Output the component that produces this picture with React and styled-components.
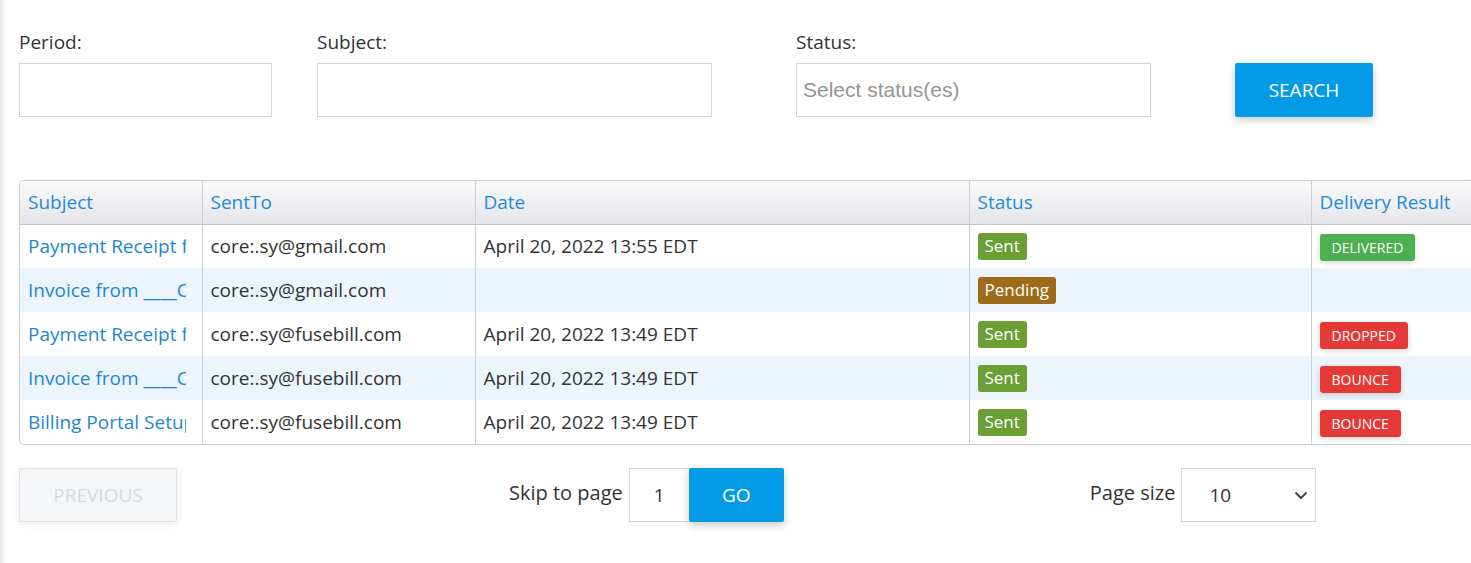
import React from 'react';
import styled, { createGlobalStyle } from 'styled-components';

const GlobalStyle = createGlobalStyle`
  html, body {
    margin: 0;
    padding: 0;
    overflow: hidden;
  }
  body {
    background: linear-gradient(to right, #e6e6e6 0, #f3f3f3 3px, #fff 7px);
    font-family: 'Open Sans', 'Noto Sans', sans-serif;
    color: #333;
  }
`;

const Page = styled.div`
  width: 1471px;
  height: 563px;
  padding: 30px 0 0 19px;
  box-sizing: border-box;
`;

const FilterRow = styled.div`
  display: flex;
  align-items: flex-end;
`;

const Field = styled.div`
  display: flex;
  flex-direction: column;
  width: ${({ w }) => w}px;
  margin-right: ${({ gap }) => gap || 0}px;
`;

const Label = styled.label`
  font-size: 19px;
  line-height: 24px;
  color: #333;
  margin-bottom: 9px;
`;

const TextInput = styled.div`
  height: 54px;
  box-sizing: border-box;
  border: 1px solid #ccd6dd;
  background: #fff;
  display: flex;
  align-items: center;
  padding-left: 6px;
`;

const Placeholder = styled.span`
  font-family: 'Liberation Sans', Arial, sans-serif;
  font-size: 21px;
  color: #959595;
`;

const PrimaryButton = styled.button`
  height: 54px;
  width: ${({ w }) => w}px;
  border: none;
  border-radius: 2px;
  background: #039be5;
  color: #fff;
  font-family: 'Open Sans', sans-serif;
  font-size: 19px;
  text-transform: uppercase;
  box-shadow: 0 3px 8px rgba(0, 0, 0, 0.22);
  cursor: pointer;
  padding: 0;
`;

const TableWrap = styled.div`
  margin-top: 63px;
  width: 1520px;
  border: 1px solid #cccccf;
  border-right: none;
  border-radius: 5px 0 0 5px;
  overflow: hidden;
`;

const Table = styled.table`
  border-collapse: collapse;
  table-layout: fixed;
  width: 100%;
  font-size: 19px;
`;

const HeadCell = styled.th`
  height: 43px;
  box-sizing: border-box;
  text-align: left;
  font-weight: 400;
  color: #1f8bd5;
  padding: 0 8px;
  background: linear-gradient(to bottom, #fafafb 0%, #e5e5ea 100%);
  border-left: 1px solid #cfcfd4;
  border-bottom: 1px solid #c6c6cd;
  white-space: nowrap;
  &:first-child { border-left: none; }
`;

const Row = styled.tr`
  height: 44px;
  background: ${({ alt }) => (alt ? '#ecf4fd' : '#fff')};
  & + & td { border-top: 1px solid #d2d8e2; }
`;

const Cell = styled.td`
  padding: 0 8px;
  border-left: 1px solid #cfcfd4;
  white-space: nowrap;
  overflow: hidden;
  color: ${({ link }) => (link ? '#1f86d0' : '#333')};
  &:first-child { border-left: none; }
`;

const Clip = styled.div`
  overflow: hidden;
  margin-right: 8px;
`;

const StatusBadge = styled.span`
  display: inline-block;
  padding: 1px 7px 2px;
  border-radius: 3px;
  color: #fff;
  font-size: 17px;
  line-height: 24px;
  background: ${({ tone }) => (tone === 'pending' ? '#9e6c18' : '#6a9f33')};
`;

const ResultBadge = styled.span`
  display: inline-block;
  margin-top: 3px;
  padding: 0 12px;
  border-radius: 3px;
  color: #fff;
  font-size: 14px;
  line-height: 27px;
  text-transform: uppercase;
  background: ${({ ok }) => (ok ? '#4caf50' : '#e53935')};
  box-shadow: 0 2px 6px rgba(0, 0, 0, 0.16);
`;

const Pager = styled.div`
  display: flex;
  align-items: center;
  margin-top: 23px;
`;

const GhostButton = styled.button`
  width: 158px;
  height: 54px;
  border: 1px solid #dde3e8;
  border-radius: 2px;
  background: #f5f6f8;
  color: #d4dbe0;
  font-family: 'Open Sans', sans-serif;
  font-size: 19px;
  box-shadow: 0 2px 8px rgba(0, 0, 0, 0.08);
  padding: 0;
`;

const Group = styled.div`
  display: flex;
  align-items: center;
  margin-left: ${({ offset }) => offset}px;
`;

const PagerText = styled.span`
  font-size: 20px;
  color: #333;
  margin-right: 6px;
  margin-top: -5px;
`;

const PageInput = styled.div`
  width: 60px;
  height: 54px;
  box-sizing: border-box;
  border: 1px solid #ccd6dd;
  border-right: none;
  display: flex;
  align-items: center;
  justify-content: center;
  font-size: 19px;
`;

const SelectBox = styled.div`
  width: 135px;
  height: 54px;
  box-sizing: border-box;
  border: 1px solid #ccd6dd;
  display: flex;
  align-items: center;
  justify-content: space-between;
  padding: 0 7px 0 27px;
  font-size: 19px;
`;

const cols = [182, 273, 494, 342, 229];

const rows = [
  { subject: 'Payment Receipt for', to: 'core:.sy@gmail.com', date: 'April 20, 2022 13:55 EDT', status: 'Sent', result: 'Delivered' },
  { subject: 'Invoice from ____Company', to: 'core:.sy@gmail.com', date: '', status: 'Pending', result: '' },
  { subject: 'Payment Receipt for', to: 'core:.sy@fusebill.com', date: 'April 20, 2022 13:49 EDT', status: 'Sent', result: 'Dropped' },
  { subject: 'Invoice from ____Company', to: 'core:.sy@fusebill.com', date: 'April 20, 2022 13:49 EDT', status: 'Sent', result: 'Bounce' },
  { subject: 'Billing Portal Setup', to: 'core:.sy@fusebill.com', date: 'April 20, 2022 13:49 EDT', status: 'Sent', result: 'Bounce' },
];

const Chevron = () => (
  <svg width="14" height="9" viewBox="0 0 14 9">
    <path d="M1.5 1.5 L7 7 L12.5 1.5" fill="none" stroke="#444" strokeWidth="2" />
  </svg>
);

export default function App() {
  return (
    <Page>
      <GlobalStyle />
      <FilterRow>
        <Field w={253} gap={45}>
          <Label>Period:</Label>
          <TextInput />
        </Field>
        <Field w={395} gap={84}>
          <Label>Subject:</Label>
          <TextInput />
        </Field>
        <Field w={355} gap={84}>
          <Label>Status:</Label>
          <TextInput>
            <Placeholder>Select status(es)</Placeholder>
          </TextInput>
        </Field>
        <PrimaryButton w={138}>Search</PrimaryButton>
      </FilterRow>

      <TableWrap>
        <Table>
          <colgroup>
            {cols.map((w, i) => <col key={i} style={{ width: w }} />)}
          </colgroup>
          <thead>
            <tr>
              <HeadCell>Subject</HeadCell>
              <HeadCell>SentTo</HeadCell>
              <HeadCell>Date</HeadCell>
              <HeadCell>Status</HeadCell>
              <HeadCell>Delivery Result</HeadCell>
            </tr>
          </thead>
          <tbody>
            {rows.map((r, i) => (
              <Row key={i} alt={i % 2 === 1}>
                <Cell link><Clip>{r.subject}</Clip></Cell>
                <Cell>{r.to}</Cell>
                <Cell>{r.date}</Cell>
                <Cell>
                  <StatusBadge tone={r.status === 'Pending' ? 'pending' : 'sent'}>{r.status}</StatusBadge>
                </Cell>
                <Cell>
                  {r.result && <ResultBadge ok={r.result === 'Delivered'}>{r.result}</ResultBadge>}
                </Cell>
              </Row>
            ))}
          </tbody>
        </Table>
      </TableWrap>

      <Pager>
        <GhostButton disabled>PREVIOUS</GhostButton>
        <Group offset={332}>
          <PagerText>Skip to page</PagerText>
          <PageInput>1</PageInput>
          <PrimaryButton w={95}>Go</PrimaryButton>
        </Group>
        <Group offset={306}>
          <PagerText>Page size</PagerText>
          <SelectBox>
            <span>10</span>
            <Chevron />
          </SelectBox>
        </Group>
      </Pager>
    </Page>
  );
}
